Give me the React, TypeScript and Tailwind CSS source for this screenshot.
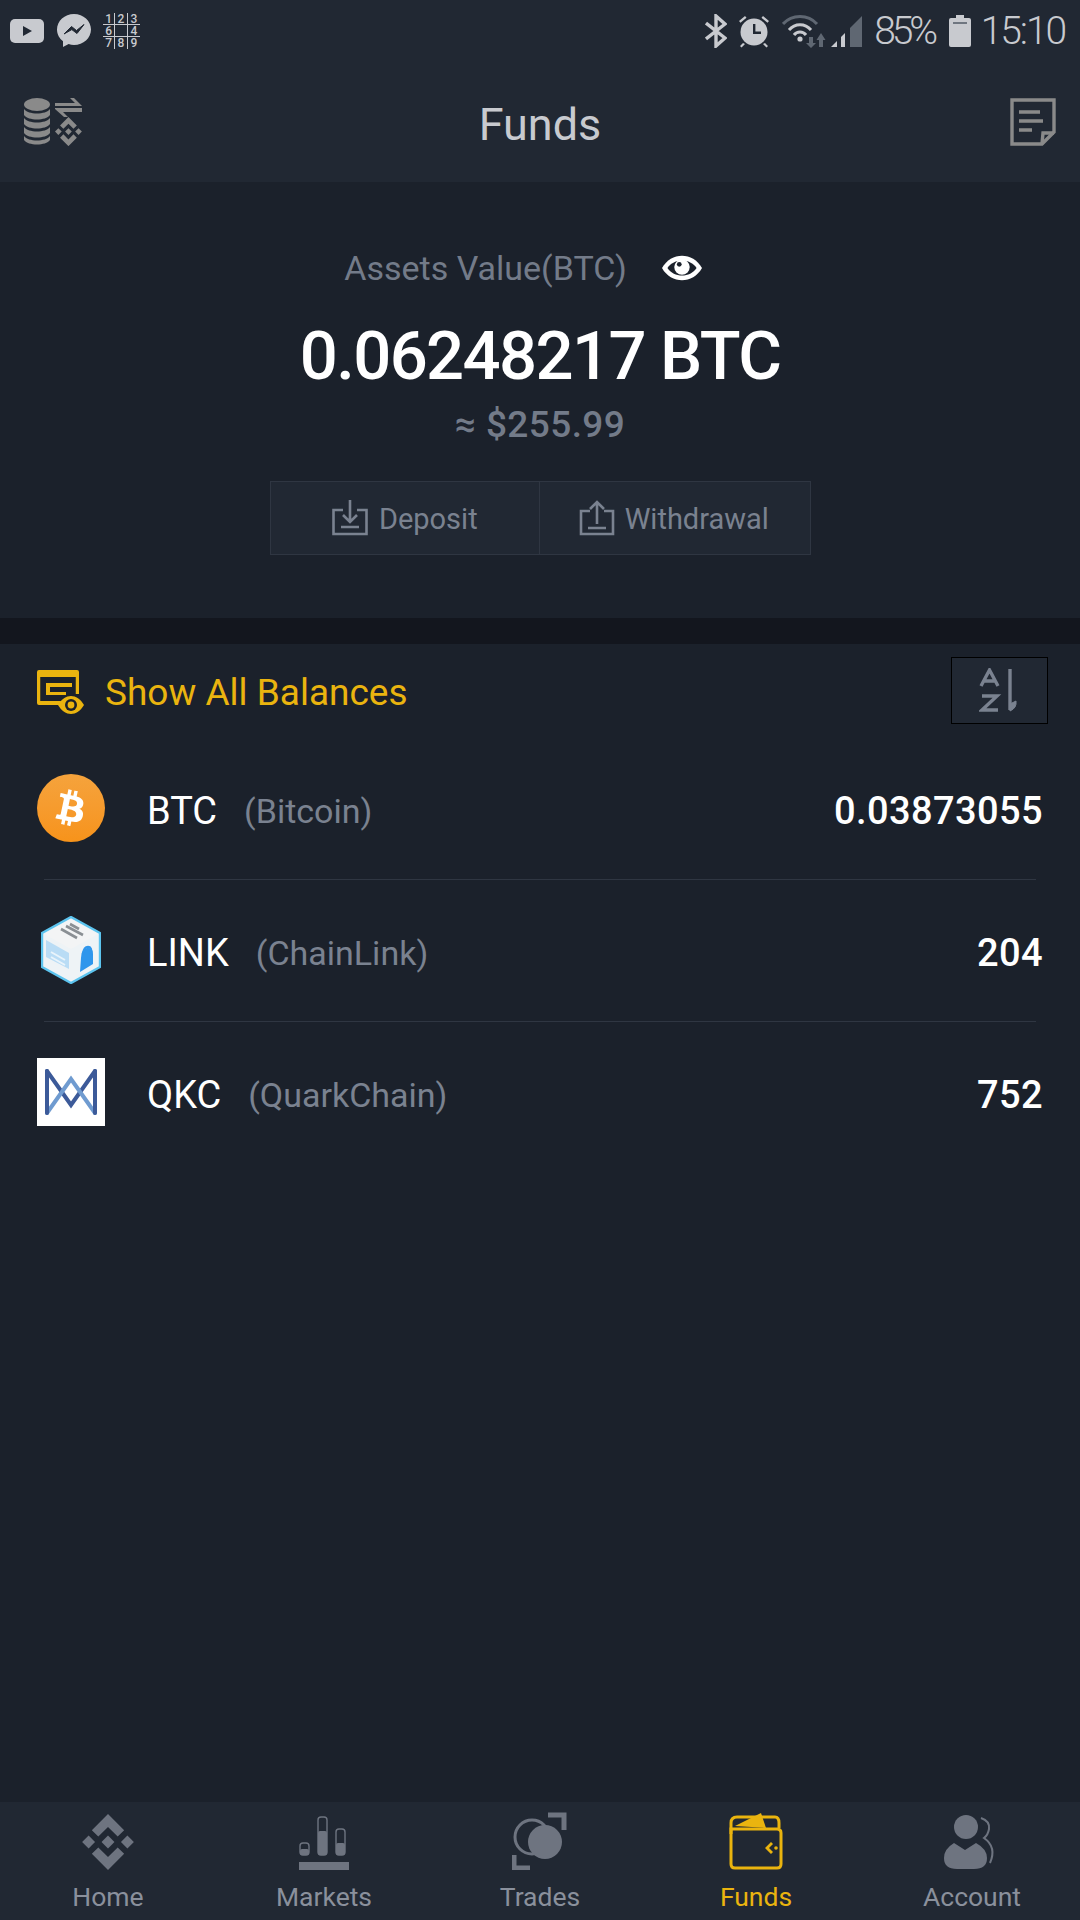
import { FaBtc } from 'react-icons/fa';

const BinanceMark = ({ className }: { className: string }) => (
  <svg viewBox="0 0 48 52" className={className} fill="currentColor">
    <path d="M24 0 L39 15 L33 21 L24 12 L15 21 L9 15 Z" />
    <path d="M24 52 L39 37 L33 31 L24 40 L15 31 L9 37 Z" />
    <path d="M24 20 L30 26 L24 32 L18 26 Z" />
    <path d="M6 20 L12 26 L6 32 L0 26 Z" />
    <path d="M42 20 L48 26 L42 32 L36 26 Z" />
  </svg>
);

const StatusLeft = () => (
  <div className="flex items-center">
    <svg viewBox="0 0 34 24" className="ml-[10px] w-[34px] h-[24px]">
      <rect width="34" height="24" rx="5" fill="#c8cacf" />
      <path d="M13 7 L22 12 L13 17 Z" fill="#212833" />
    </svg>
    <svg viewBox="0 0 34 36" className="ml-[13px] w-[34px] h-[36px]">
      <path d="M17 1 C7.6 1 0 8 0 16.5 C0 21.3 2.4 25.5 6 28.2 L6 34 L11.6 31 C13.3 31.6 15.1 32 17 32 C26.4 32 34 25 34 16.5 C34 8 26.4 1 17 1 Z" fill="#c8cacf" />
      <path d="M7 21 L14.5 13.5 L19.5 17.5 L27 11.5 L20 20.5 L14.8 16.6 Z" fill="#212833" stroke="#212833" />
    </svg>
    <div className="ml-[12px] grid grid-cols-3 w-[37px] h-[37px] text-[12px] leading-[12px] font-medium text-[#c8cacf] text-center">
      {['1', '2', '3', '6', '', '4', '7', '8', '9'].map((n, i) => (
        <span
          key={i}
          className={`h-[12.3px] ${i % 3 !== 2 ? 'border-r border-[#c8cacf]' : ''} ${i < 6 ? 'border-b border-[#c8cacf]' : ''}`}
        >
          {n}
        </span>
      ))}
    </div>
  </div>
);

const StatusRight = () => (
  <div className="flex items-center text-[#c8cacf]">
    <svg viewBox="0 0 22 34" className="w-[22px] h-[34px]" fill="none" stroke="#c8cacf" strokeWidth="3.4">
      <path d="M1 9 L20 24 L11 32 L11 2 L20 10 L1 25" />
    </svg>
    <svg viewBox="0 0 32 34" className="ml-[11px] w-[32px] h-[34px]" fill="#c8cacf">
      <circle cx="16" cy="18" r="13.5" />
      <path d="M15 10 V20 H23 V17.6 H17.4 V10 Z" fill="#212833" />
      <path d="M1 7 L7 2 L8.5 3.8 L2.5 8.8 Z M31 7 L25 2 L23.5 3.8 L29.5 8.8 Z M5 29 L2 32 L3.5 33.5 L7 30 Z M27 29 L30 32 L28.5 33.5 L25 30 Z" />
    </svg>
    <svg viewBox="0 0 44 34" className="ml-[12px] w-[44px] h-[34px]" fill="none">
      <path d="M1 10 C10 0 26 0 35 10" stroke="#5f6772" strokeWidth="3" />
      <path d="M7 16 C13 9 23 9 29 16" stroke="#c8cacf" strokeWidth="3" />
      <path d="M12 21 C15 17 21 17 24 21" stroke="#c8cacf" strokeWidth="3" />
      <circle cx="18" cy="25" r="2.6" fill="#c8cacf" />
      <path d="M27 23 H31 V29 H34 L29 34 L24 29 H27 Z" fill="#5f6772" />
      <path d="M37 33 V26 H34.5 L39 19 L43.5 26 H41 V33 Z" fill="#5f6772" />
    </svg>
    <svg viewBox="0 0 32 32" className="ml-[4px] w-[32px] h-[32px]">
      <path d="M1 32 L7 26 V32 Z" fill="#c8cacf" />
      <path d="M11 22 L15 18 V32 H11 Z" fill="#c8cacf" />
      <path d="M20 13 L32 1 V32 H20 Z" fill="#5f6772" />
    </svg>
    <span className="ml-[12px] text-[39px] leading-none font-light tracking-[-4.2px]">85%</span>
    <svg viewBox="0 0 22 32" className="ml-[15px] w-[22px] h-[32px]">
      <path d="M7 0 H15 V3 H20 Q22 3 22 5 V30 Q22 32 20 32 H2 Q0 32 0 30 V5 Q0 3 2 3 H7 Z" fill="#c8cacf" />
      <rect x="4" y="7" width="14" height="2" fill="#6f7680" />
    </svg>
    <span className="ml-[10px] mr-[15px] text-[39px] leading-none font-light tracking-[-2.1px]">15:10</span>
  </div>
);

const TransferIcon = () => (
  <svg viewBox="0 0 60 48" className="w-[60px] h-[48px]" fill="#8a8a8a">
    <ellipse cx="13" cy="6.5" rx="13" ry="6.5" />
    <path d="M0 11 C4 17 22 17 26 11 V17 C22 23 4 23 0 17 Z" />
    <path d="M0 20 C4 26 22 26 26 20 V26 C22 32 4 32 0 26 Z" />
    <path d="M0 29 C4 35 22 35 26 29 V35 C22 41 4 41 0 35 Z" />
    <path d="M0 38 C4 44 22 44 26 38 V42 C22 48 4 48 0 42 Z" />
    <path d="M31 5 H51 L46 0 H50 L58 8 H31 Z" />
    <path d="M31 10 H58 V14 H39 L44 19 H40 L31 11 Z" />
    <g transform="translate(31 19) scale(0.56)">
      <path d="M24 0 L39 15 L33 21 L24 12 L15 21 L9 15 Z" />
      <path d="M24 52 L39 37 L33 31 L24 40 L15 31 L9 37 Z" />
      <path d="M24 20 L30 26 L24 32 L18 26 Z" />
      <path d="M6 20 L12 26 L6 32 L0 26 Z" />
      <path d="M42 20 L48 26 L42 32 L36 26 Z" />
    </g>
  </svg>
);

const NoteIcon = () => (
  <svg viewBox="0 0 46 48" className="w-[46px] h-[48px]" fill="none" stroke="#8a8a8a" strokeWidth="3.4">
    <path d="M2 2 H44 V34 L32 46 H2 Z" />
    <path d="M32 46 L33 35 H44" />
    <path d="M9 14 H30 M9 23 H33 M9 32 H22" />
  </svg>
);

const EyeIcon = () => (
  <svg viewBox="0 0 44 28" className="w-[40px] h-[26px]">
    <path d="M0 14 C10 -4 34 -4 44 14 C34 32 10 32 0 14 Z" fill="#fff" />
    <path d="M6 14 C13 3 31 3 38 14 C31 25 13 25 6 14 Z" fill="#1b212b" />
    <circle cx="22" cy="13" r="8.5" fill="#fff" />
    <circle cx="19" cy="10" r="2.6" fill="#1b212b" />
  </svg>
);

const DepositIcon = () => (
  <svg viewBox="0 0 36 36" className="w-[36px] h-[36px]" fill="none" stroke="#7a8290" strokeWidth="2.6">
    <path d="M11 10 H1.5 V34 H34.5 V10 H25" />
    <path d="M18 0 V21 M11 15 L18 22 L25 15 M9 27 H27" />
  </svg>
);

const WithdrawIcon = () => (
  <svg viewBox="0 0 36 36" className="w-[36px] h-[36px]" fill="none" stroke="#7a8290" strokeWidth="2.6">
    <path d="M11 11 H2 V34 H34 V11 H25" />
    <path d="M18 24 V2 M11 9 L18 2 L25 9 M9 28 H27" />
  </svg>
);

const BalancesIcon = () => (
  <svg viewBox="0 0 48 44" className="mt-[2px] w-[48px] h-[44px]">
    <path d="M2 0 H40 Q42 0 42 2 V24 H34 Q26 26 22 35 H2 Q0 35 0 33 V2 Q0 0 2 0 Z" fill="#eab40f" />
    <rect x="3.5" y="7" width="35" height="24" fill="#1b212b" />
    <path d="M3.5 7 H38.5 V26 H30 Q25 27 21 31 H3.5 Z" fill="#1b212b" />
    <path d="M9 13 H35 V17 H13 V22 H29 V25 H9 Z" fill="#eab40f" />
    <path d="M21 35 C28 23 40 23 47 35 C40 47 28 47 21 35 Z" fill="#eab40f" />
    <circle cx="34" cy="35" r="6" fill="#1b212b" />
    <circle cx="34" cy="35" r="3.4" fill="#eab40f" />
  </svg>
);

const SortIcon = () => (
  <svg viewBox="0 0 42 44" className="w-[42px] h-[44px]" fill="none" stroke="#7a8290" strokeWidth="3.4">
    <path d="M2 18 L10.5 2 L19 18 M5 13 H16" />
    <path d="M3 28 H18 L3 42 H19" />
    <path d="M31 1 V42" />
    <path d="M31 43 Q38 40 37 33 L31 36 Z" fill="#7a8290" strokeWidth="1" />
  </svg>
);

const LinkLogo = () => (
  <svg viewBox="0 0 60 68" className="w-[60px] h-[68px]">
    <path d="M30 1 L59 17 V51 L30 67 L1 51 V17 Z" fill="#eef3f6" stroke="#5cc4ef" strokeWidth="2.4" />
    <path d="M30 3 L57 18 L30 33 L3 18 Z" fill="#f3f4f5" />
    <path d="M20 13 L36 22 M25 10 L42 19 M29 8 L38 13" stroke="#8a8f94" strokeWidth="2.6" />
    <path d="M5 24 L28 37 V53 L5 41 Z" fill="#b9dcf5" />
    <path d="M10 36 L24 44 M10 41 L24 49" stroke="#e9f4fb" strokeWidth="2" />
    <path d="M40 42 Q40 34 46 32 Q52 31 52 38 V48 L39 56 Z" fill="#2f96ec" />
    <path d="M42 38 Q43 31 47 31 Q51 31 50 38" fill="none" stroke="#2f96ec" strokeWidth="2.4" />
  </svg>
);

const QkcLogo = () => (
  <div className="w-[68px] h-[68px] bg-white flex items-center justify-center">
    <svg viewBox="0 0 54 48" className="w-[54px] h-[48px]" fill="none" strokeWidth="4" strokeLinecap="round">
      <path d="M3 3 L27 37 L51 3" stroke="#3c5a99" />
      <path d="M3 45 L27 11 L51 45" stroke="#6f9bd0" />
      <path d="M3 3 V45 M51 3 V45" stroke="#3c5a99" />
    </svg>
  </div>
);

const HomeIcon = () => <BinanceMark className="w-[52px] h-[56px] text-[#6e7480]" />;

const MarketsIcon = () => (
  <svg viewBox="0 0 50 54" className="w-[50px] h-[54px]" fill="#6e7480">
    <rect y="46" width="50" height="8" />
    <rect x="1" y="27" width="9" height="12" rx="3" fill="none" stroke="#6e7480" strokeWidth="1.4" />
    <rect x="1" y="33" width="9" height="6" rx="2" />
    <rect x="19" y="1" width="9" height="38" rx="3" fill="none" stroke="#6e7480" strokeWidth="1.4" />
    <rect x="19" y="15" width="9" height="24" rx="2" />
    <rect x="37" y="13" width="9" height="26" rx="3" fill="none" stroke="#6e7480" strokeWidth="1.4" />
    <rect x="37" y="27" width="9" height="12" rx="2" />
  </svg>
);

const TradesIcon = () => (
  <svg viewBox="0 0 56 58" className="w-[56px] h-[58px]" fill="none" stroke="#6e7480" strokeWidth="3">
    <circle cx="20" cy="25" r="17" />
    <circle cx="33" cy="30" r="17" fill="#6e7480" stroke="none" />
    <path d="M36 3 H52 V18 M2 43 V56 H18" strokeWidth="5" />
  </svg>
);

const FundsIcon = () => (
  <svg viewBox="0 0 54 58" className="w-[54px] h-[58px]" fill="none" stroke="#eab40f" strokeWidth="3">
    <path d="M2 22 V11 Q2 5 8 5 H46 Q50 5 50 11 V16" />
    <path d="M2 17 H48 Q52 17 52 21 V52 Q52 56 48 56 H6 Q2 56 2 52 Z" />
    <path d="M6 14 L32 1 L37 16 Z" fill="#eab40f" stroke="none" />
    <path d="M42 30 L36 36 L42 42 L44 40 L40 36 L44 32 Z" fill="#eab40f" stroke="none" />
    <circle cx="47" cy="36" r="1.8" fill="#eab40f" stroke="none" />
  </svg>
);

const AccountIcon = () => (
  <svg viewBox="0 0 56 56" className="w-[56px] h-[56px]" fill="#6e7480">
    <circle cx="22" cy="13" r="12" />
    <path d="M10 29 L21 36 L32 29 Q43 35 43 44 Q43 55 30 55 H13 Q0 55 0 44 Q0 35 10 29 Z" />
    <path d="M37 4 Q46 7 45 15 Q44 21 40 24 Q53 33 46 49" fill="none" stroke="#6e7480" strokeWidth="2" />
  </svg>
);

const coins = [
  { symbol: 'BTC', name: '(Bitcoin)', amount: '0.03873055' },
  { symbol: 'LINK', name: '(ChainLink)', amount: '204' },
  { symbol: 'QKC', name: '(QuarkChain)', amount: '752' },
];

const tabs = [
  { label: 'Home', icon: <HomeIcon /> },
  { label: 'Markets', icon: <MarketsIcon /> },
  { label: 'Trades', icon: <TradesIcon /> },
  { label: 'Funds', icon: <FundsIcon />, active: true },
  { label: 'Account', icon: <AccountIcon /> },
];

const CoinLogo = ({ symbol }: { symbol: string }) => {
  if (symbol === 'BTC') {
    return (
      <div className="w-[68px] h-[68px] rounded-full bg-gradient-to-b from-[#f5a33c] to-[#f7931a] flex items-center justify-center">
        <FaBtc className="w-[36px] h-[36px] text-white rotate-12" />
      </div>
    );
  }
  if (symbol === 'LINK') return <div className="w-[68px] flex justify-center"><LinkLogo /></div>;
  return <QkcLogo />;
};

export default function App() {
  return (
    <div className="w-[1080px] h-[1920px] flex flex-col bg-[#1b212b] [font-family:Roboto,sans-serif]">
      {/* Status bar + title */}
      <div className="bg-[#212833] h-[182px] shrink-0">
        <div className="h-[62px] flex items-center justify-between">
          <StatusLeft />
          <StatusRight />
        </div>
        <div className="h-[120px] flex items-start justify-between pl-[24px] pr-[24px] pt-[36px]">
          <TransferIcon />
          <span className="text-[45px] leading-[54px] text-[#c8cacf]">Funds</span>
          <div className="w-[60px] flex justify-end"><NoteIcon /></div>
        </div>
      </div>

      {/* Assets */}
      <div className="h-[436px] shrink-0 flex flex-col items-center pt-[66px]">
        <div className="flex items-center h-[40px] mr-[34px]">
          <span className="text-[34px] text-[#737b89]">Assets Value(BTC)</span>
          <span className="ml-[35px]"><EyeIcon /></span>
        </div>
        <div className="mt-[28px] text-[67px] leading-[80px] font-medium text-white tracking-[-1.6px]">0.06248217 BTC</div>
        <div className="mt-[6px] text-[37px] leading-[46px] font-medium text-[#737b89] tracking-[0.4px]">≈ $255.99</div>
        <div className="mt-[33px] flex w-[541px] h-[74px] border border-[#2f3642] bg-[#212833]">
          <div className="w-1/2 flex items-center justify-center gap-[11px] border-r border-[#2f3642]">
            <DepositIcon />
            <span className="pt-[4px] text-[29px] text-[#7a8290]">Deposit</span>
          </div>
          <div className="w-1/2 flex items-center justify-center gap-[10px] pr-[2px]">
            <WithdrawIcon />
            <span className="pt-[4px] text-[29px] text-[#7a8290]">Withdrawal</span>
          </div>
        </div>
      </div>

      <div className="h-[26px] shrink-0 bg-[#13161e]" />

      {/* Balances */}
      <div className="flex-1">
        <div className="h-[94px] flex items-center justify-between pl-[37px] pr-[32px]">
          <div className="flex items-center gap-[20px]">
            <BalancesIcon />
            <span className="pt-[3px] text-[37px] text-[#eab40f]">Show All Balances</span>
          </div>
          <div className="mb-[2px] w-[97px] h-[67px] bg-[#212833] border border-black flex items-center justify-center">
            <SortIcon />
          </div>
        </div>
        {coins.map((coin, i) => (
          <div key={coin.symbol} className="h-[142px] flex flex-col">
            <div className="flex-1 flex items-center pl-[37px] pr-[37px]">
              <div className="mb-[2px]"><CoinLogo symbol={coin.symbol} /></div>
              <span className="ml-[42px] pt-[5px] text-[38px] text-white">{coin.symbol}</span>
              <span className="ml-[27px] pt-[5px] text-[34px] text-[#7a8290]">{coin.name}</span>
              <span className="ml-auto pt-[5px] text-[38px] font-medium text-white tracking-[0.4px]">{coin.amount}</span>
            </div>
            {i < coins.length - 1 && <div className="mx-[44px] h-px bg-[#2f3642]" />}
          </div>
        ))}
      </div>

      {/* Bottom tabs */}
      <div className="h-[118px] shrink-0 bg-[#212833] grid grid-cols-5">
        {tabs.map((tab) => (
          <div key={tab.label} className="flex flex-col items-center">
            <div className="h-[77px] flex items-end pb-[9px]">{tab.icon}</div>
            <span className={`text-[26.5px] leading-[36px] ${tab.active ? 'text-[#eab40f]' : 'text-[#8a909c]'}`}>{tab.label}</span>
          </div>
        ))}
      </div>
    </div>
  );
}
